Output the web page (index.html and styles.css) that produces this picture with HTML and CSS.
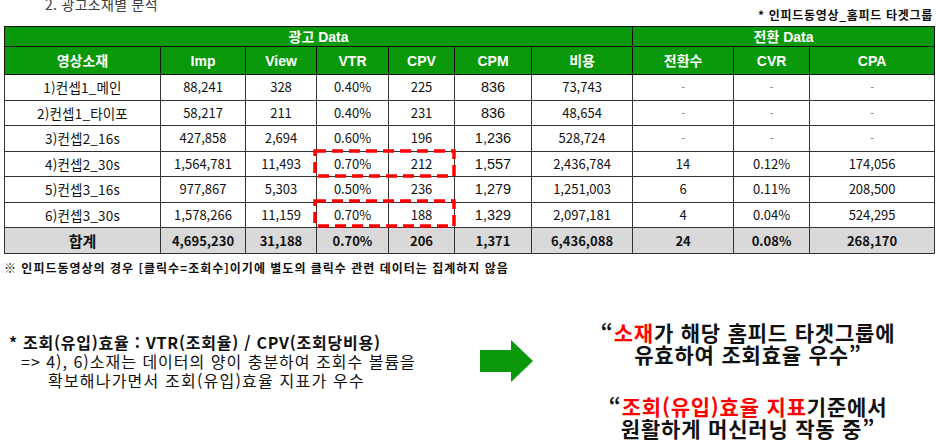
FILE: index.html
```html
<!DOCTYPE html>
<html lang="ko">
<head>
<meta charset="utf-8">
<title>광고소재별 분석</title>
<link rel="stylesheet" href="styles.css">
</head>
<body>
<div class="page">
  <div class="top">
    <div class="title">2. 광고소재별 분석</div>
    <div class="note">* 인피드동영상_홈피드 타겟그룹</div>
  </div>
  <div class="table-wrap">
    <table class="data">
      <colgroup>
        <col style="width:156px"><col style="width:85px"><col style="width:71px"><col style="width:72px"><col style="width:66px"><col style="width:77px"><col style="width:101px"><col style="width:101px"><col style="width:76px"><col style="width:125px">
      </colgroup>
      <thead>
        <tr class="group">
          <th colspan="7">광고 Data</th>
          <th colspan="3">전환 Data</th>
        </tr>
        <tr class="cols">
          <th>영상소재</th><th>Imp</th><th>View</th><th>VTR</th><th>CPV</th><th>CPM</th><th>비용</th><th>전환수</th><th>CVR</th><th>CPA</th>
        </tr>
      </thead>
      <tbody>
        <tr><td class="name">1)컨셉1_메인</td><td>88,241</td><td>328</td><td>0.40%</td><td>225</td><td class="cpm">836</td><td>73,743</td><td class="na">-</td><td class="na">-</td><td class="na">-</td></tr>
        <tr><td class="name">2)컨셉1_타이포</td><td>58,217</td><td>211</td><td>0.40%</td><td>231</td><td class="cpm">836</td><td>48,654</td><td class="na">-</td><td class="na">-</td><td class="na">-</td></tr>
        <tr><td class="name">3)컨셉2_16s</td><td>427,858</td><td>2,694</td><td>0.60%</td><td>196</td><td class="cpm">1,236</td><td>528,724</td><td class="na">-</td><td class="na">-</td><td class="na">-</td></tr>
        <tr><td class="name">4)컨셉2_30s</td><td>1,564,781</td><td>11,493</td><td>0.70%</td><td>212</td><td class="cpm">1,557</td><td>2,436,784</td><td>14</td><td>0.12%</td><td>174,056</td></tr>
        <tr><td class="name">5)컨셉3_16s</td><td>977,867</td><td>5,303</td><td>0.50%</td><td>236</td><td class="cpm">1,279</td><td>1,251,003</td><td>6</td><td>0.11%</td><td>208,500</td></tr>
        <tr><td class="name">6)컨셉3_30s</td><td>1,578,266</td><td>11,159</td><td>0.70%</td><td>188</td><td class="cpm">1,329</td><td>2,097,181</td><td>4</td><td>0.04%</td><td>524,295</td></tr>
        <tr class="total"><td class="total-label">합계</td><td>4,695,230</td><td>31,188</td><td>0.70%</td><td>206</td><td>1,371</td><td>6,436,088</td><td>24</td><td>0.08%</td><td>268,170</td></tr>
      </tbody>
    </table>
    <svg class="mark mark-1" width="143" height="29" viewBox="0 0 143 29"><rect x="2" y="2" width="139" height="25" fill="none" stroke="#ff0000" stroke-width="3.5" stroke-dasharray="11 6"/></svg>
    <svg class="mark mark-2" width="143" height="29" viewBox="0 0 143 29"><rect x="2" y="2" width="139" height="25" fill="none" stroke="#ff0000" stroke-width="3.5" stroke-dasharray="11 6"/></svg>
  </div>
  <div class="footnote">※ 인피드동영상의 경우 [클릭수=조회수]이기에 별도의 클릭수 관련 데이터는 집계하지 않음</div>
  <div class="bottom">
    <div class="points">
      <div class="p-head">* 조회(유입)효율 : VTR(조회율) / CPV(조회당비용)</div>
      <div class="p-line">=&gt; 4), 6)소재는 데이터의 양이 충분하여 조회수 볼륨을</div>
      <div class="p-cont">확보해나가면서 조회(유입)효율 지표가 우수</div>
    </div>
    <svg class="arrow" width="53" height="42" viewBox="0 0 53 42"><polygon points="0,10 31,10 31,0 53,21 31,42 31,32 0,32" fill="#0a990a"/></svg>
    <div class="quotes">
      <p class="quote">“<span class="hl">소재</span>가 해당 홈피드 타겟그룹에<br>유효하여 조회효율 우수”</p>
      <p class="quote">“<span class="hl">조회(유입)효율 지표</span>기준에서<br>원활하게 머신러닝 작동 중”</p>
    </div>
  </div>
</div>
</body>
</html>
```
FILE: styles.css
```css
html, body {
  margin: 0;
  padding: 0;
  background: #ffffff;
}
body {
  font-family: "Noto Sans CJK KR", "Noto Sans", sans-serif;
  color: #111;
}
.page {
  width: 936px;
  height: 445px;
  overflow: hidden;
}
.top {
  height: 26px;
  display: flex;
  justify-content: space-between;
  align-items: flex-start;
}
.title {
  margin: -4px 0 0 45px;
  font-size: 14px;
  line-height: 16px;
  color: #404040;
  letter-spacing: 0.3px;
}
.note {
  margin: 9px 3px 0 0;
  font-size: 12px;
  line-height: 12px;
  font-weight: 700;
  letter-spacing: 0.7px;
  color: #111;
}
.table-wrap {
  position: relative;
  margin-left: 4px;
  width: 930px;
}
.data {
  width: 930px;
  table-layout: fixed;
  border-collapse: collapse;
  border: 1.5px solid #222;
}
.data th, .data td {
  padding: 0;
  text-align: center;
  white-space: nowrap;
  overflow: hidden;
}
.data th {
  background: #0a990a;
  color: #fff;
  font-family: "Liberation Sans", "Noto Sans CJK KR", sans-serif;
  font-weight: 700;
  font-size: 14px;
  border: 1px solid #111;
}
.data tr.group th {
  height: 19px;
  line-height: 16px;
}
.data tr.cols th {
  height: 27px;
  line-height: 16px;
}
.data td {
  height: 24.5px;
  font-size: 13px;
  line-height: 16px;
  color: #111;
  border: 1px solid #333;
}
.data td.name {
  font-size: 13.5px;
  letter-spacing: 0.2px;
}
.data td.cpm {
  font-family: "Liberation Sans", sans-serif;
  font-size: 14.5px;
}
.data td.na {
  color: #777;
  font-size: 11px;
}
.data tr.total td {
  background: #d9d9d9;
  font-weight: 700;
  height: 25px;
}
.data td.total-label {
  font-size: 15px;
}
.mark {
  position: absolute;
  display: block;
}
.mark-1 {
  left: 309px;
  top: 123px;
}
.mark-2 {
  left: 309px;
  top: 173px;
}
.footnote {
  margin: 7px 0 0 4px;
  font-size: 12px;
  line-height: 14px;
  font-weight: 700;
  letter-spacing: 1px;
  color: #111;
}
.bottom {
  margin-top: 47px;
  display: flex;
  align-items: flex-start;
}
.points {
  width: 480px;
  padding-top: 11px;
  font-size: 16px;
  line-height: 19px;
  color: #111;
}
.p-head {
  padding-left: 9px;
  font-weight: 700;
  letter-spacing: 0.75px;
}
.p-line {
  padding-left: 21px;
  letter-spacing: 1px;
}
.p-cont {
  padding-left: 48px;
  letter-spacing: 1.2px;
}
.arrow {
  display: block;
  margin-top: 18px;
  flex: none;
}
.quotes {
  margin-left: auto;
  width: 376px;
  text-align: center;
}
.quote {
  margin: 0 0 31px 0;
  font-size: 21px;
  line-height: 21.5px;
  font-weight: 700;
  letter-spacing: 0.8px;
  color: #111;
}
.hl {
  color: #ff0000;
}
```
